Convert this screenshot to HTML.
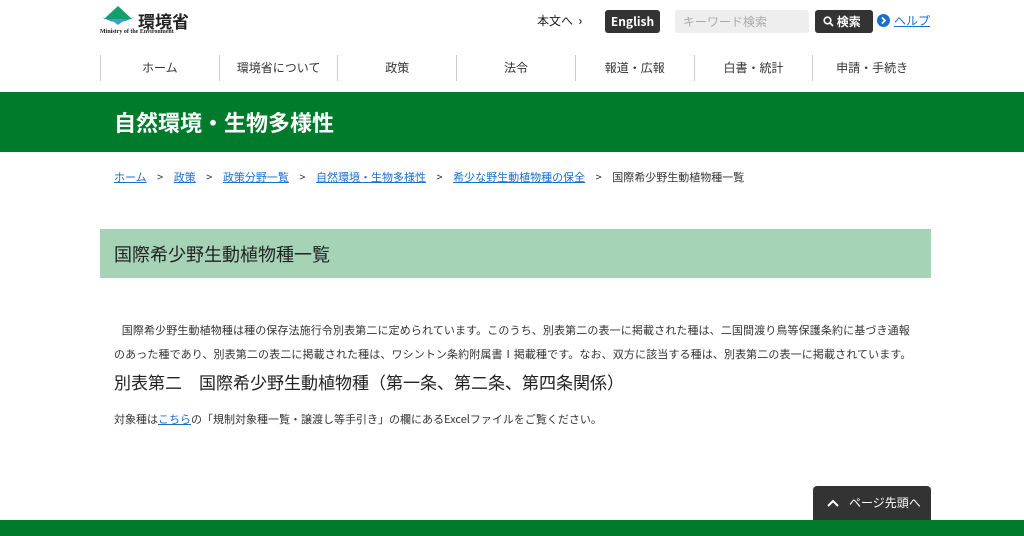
<!DOCTYPE html>
<html><head><meta charset="utf-8"><style>
*{margin:0;padding:0;box-sizing:border-box}
body{width:1024px;height:536px;overflow:hidden;background:#fff;font-family:"Noto Sans CJK JP",sans-serif;color:#333;position:relative}
.a{position:absolute;white-space:nowrap}
a{color:#1a6fc9;text-decoration:underline}
.s{display:inline-block;margin:0 10.5px}
.nav{position:absolute;top:55px;left:100px;width:831px;height:26px;display:flex}
.nav div{flex:1;border-left:1px solid #ccc;text-align:center;font-size:12px;line-height:26px;color:#333}
</style></head><body>
<svg class="a" style="left:100px;top:5px" width="36" height="22" viewBox="0 0 36 22">
<polygon points="18,1 32,14 4,14" fill="#12a06a"/>
<path d="M2,12 Q18,22 34,12 Q18,18 2,12Z" fill="#1a8fd0"/>
<path d="M10,14 L26,14 L18,20Z" fill="#3aa0d8"/>
</svg>
<div class="a" style="left:138px;top:9px;font-size:17px;font-weight:bold;color:#222;line-height:24px">環境省</div>
<div class="a" style="left:100px;top:29px;font-size:6px;font-family:'Liberation Serif',serif;font-weight:bold;color:#222">Ministry of the Environment</div>
<div class="a" style="left:537px;top:12px;font-size:12px;color:#222;line-height:18px">本文へ &nbsp;<b>›</b></div>
<div class="a" style="left:605px;top:10px;width:55px;height:23px;background:#333;border-radius:3px;color:#fff;font-size:12px;font-weight:bold;line-height:23px;text-align:center">English</div>
<div class="a" style="left:675px;top:10px;width:134px;height:23px;background:#eee;border-radius:3px;color:#aaa;font-size:12px;line-height:23px;padding-left:8px">キーワード検索</div>
<div class="a" style="left:815px;top:10px;width:58px;height:23px;background:#333;border-radius:3px;color:#fff;font-size:12px;font-weight:bold;line-height:23px;padding-left:8px">
<svg width="11" height="11" viewBox="0 0 11 11" style="vertical-align:-1px"><circle cx="4.5" cy="4.5" r="3.3" fill="none" stroke="#fff" stroke-width="1.6"/><path d="M7,7 L10,10" stroke="#fff" stroke-width="1.8"/></svg> 検索</div>
<div class="a" style="left:877px;top:14px;width:13px;height:13px;border-radius:50%;background:#1a6fc9"></div>
<svg class="a" style="left:877px;top:14px" width="13" height="13"><path d="M5,3.5 L8,6.5 L5,9.5" stroke="#fff" stroke-width="1.8" fill="none"/></svg>
<div class="a" style="left:894px;top:12px;font-size:12px;line-height:18px"><a>ヘルプ</a></div>
<div class="nav"><div>ホーム</div><div>環境省について</div><div>政策</div><div>法令</div><div>報道・広報</div><div>白書・統計</div><div>申請・手続き</div></div>
<div class="a" style="left:0;top:92px;width:1024px;height:60px;background:#007b2c"></div>
<div class="a" style="left:114px;top:106px;font-size:22px;font-weight:bold;color:#fff;line-height:32px">自然環境・生物多様性</div>
<div class="a" style="left:114px;top:169px;font-size:11px;color:#333;line-height:16px"><a>ホーム</a><span class="s">&gt;</span><a>政策</a><span class="s">&gt;</span><a>政策分野一覧</a><span class="s">&gt;</span><a>自然環境・生物多様性</a><span class="s">&gt;</span><a>希少な野生動植物種の保全</a><span class="s">&gt;</span>国際希少野生動植物種一覧</div>
<div class="a" style="left:100px;top:229px;width:831px;height:49px;background:#a6d3b5"></div>
<div class="a" style="left:114px;top:240px;font-size:18px;color:#222;line-height:28px">国際希少野生動植物種一覧</div>
<div class="a" style="left:114px;top:318px;font-size:11px;line-height:24px;color:#333;letter-spacing:0.12px">&nbsp;&nbsp;&nbsp;国際希少野生動植物種は種の保存法施行令別表第二に定められています。このうち、別表第二の表一に掲載された種は、二国間渡り鳥等保護条約に基づき通報<br>のあった種であり、別表第二の表二に掲載された種は、ワシントン条約附属書Ⅰ掲載種です。なお、双方に該当する種は、別表第二の表一に掲載されています。</div>
<div class="a" style="left:114px;top:369px;font-size:17px;color:#222;line-height:26px">別表第二　国際希少野生動植物種（第一条、第二条、第四条関係）</div>
<div class="a" style="left:114px;top:410px;font-size:11px;color:#333;line-height:18px">対象種は<a>こちら</a>の「規制対象種一覧・譲渡し等手引き」の欄にあるExcelファイルをご覧ください。</div>
<div class="a" style="left:813px;top:486px;width:118px;height:36px;background:#333;border-radius:4px 4px 0 0;color:#fff;font-size:12px;line-height:34px;padding-left:36px">ページ先頭へ</div>
<svg class="a" style="left:826px;top:498px" width="14" height="10"><path d="M2,8 L7,3 L12,8" stroke="#fff" stroke-width="2" fill="none"/></svg>
<div class="a" style="left:0;top:520px;width:1024px;height:16px;background:#007b2c"></div>
</body></html>
